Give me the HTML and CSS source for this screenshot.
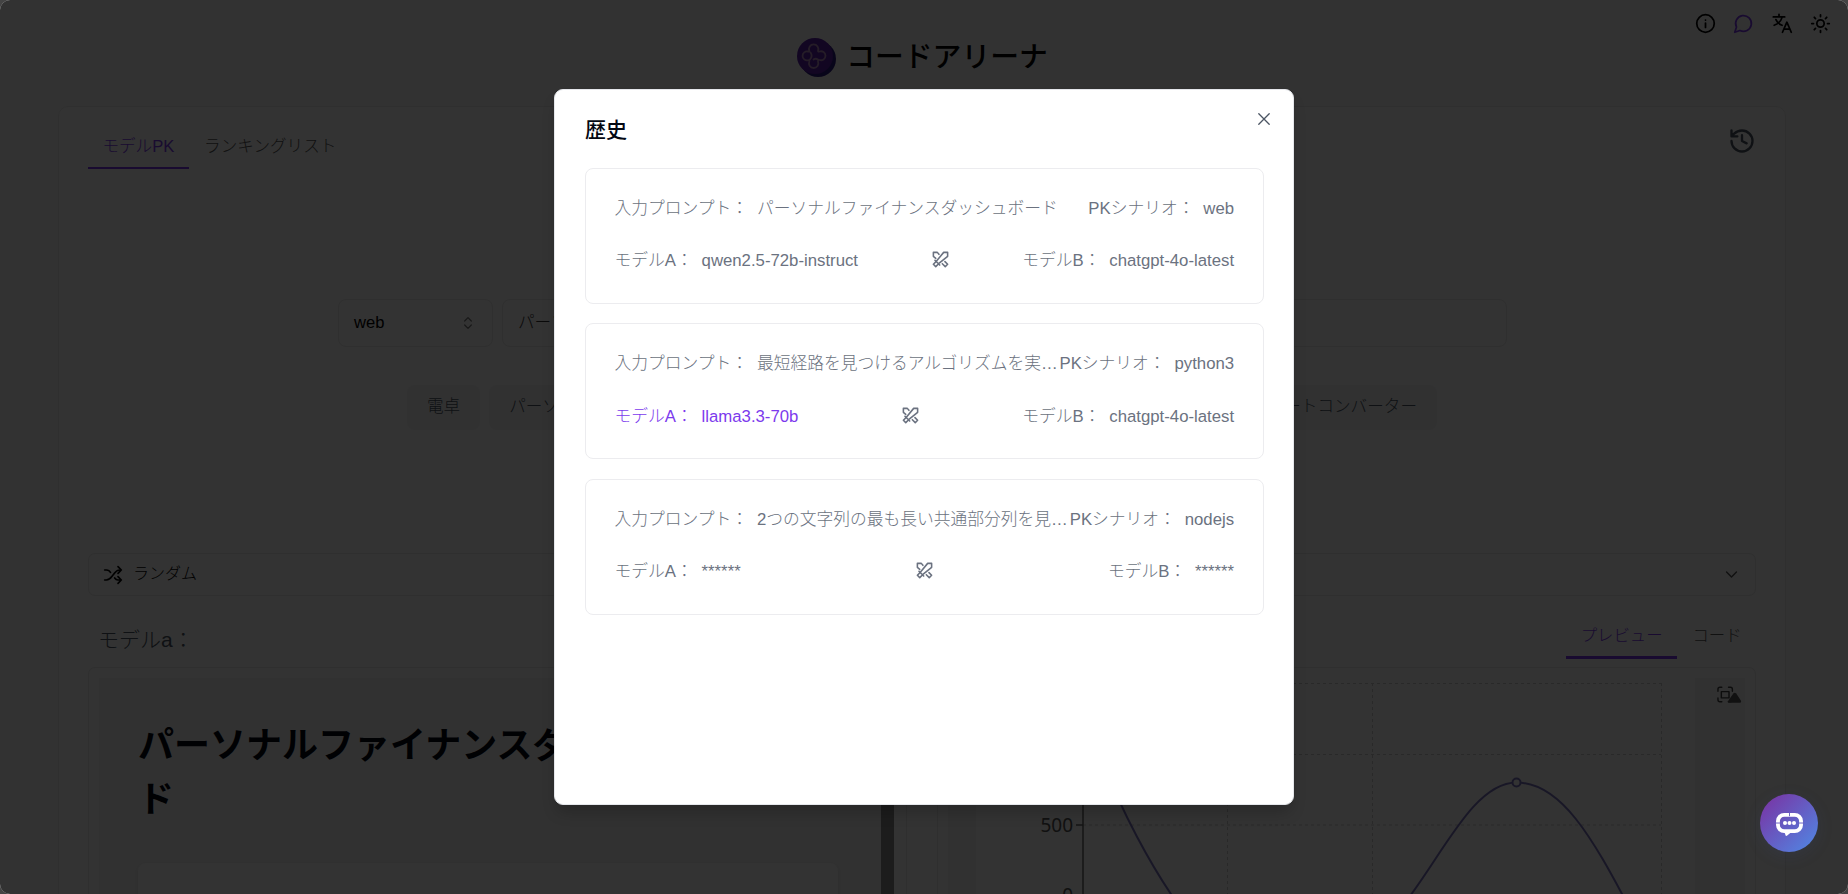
FILE: index.html
```html
<!DOCTYPE html>
<html lang="ja">
<head>
<meta charset="utf-8">
<title>コードアリーナ</title>
<link rel="stylesheet" href="styles.css">
</head>
<body>
<svg width="0" height="0" class="defs">
  <symbol id="swords" viewBox="0 0 24 24"><path d="M21 3v5l-11 9-4 4-3-3 4-4 9-11zM5 13l6 6M14.320 17.320 18 21l3-3-3.365-3.365M10 5.500 8 3H3v5l3 2.500"/></symbol>
</svg>
<div class="page">
  <header class="header">
    <svg class="logo" viewBox="0 0 39 39">
      <circle cx="21" cy="21" r="18" fill="#2c1a80"/><circle cx="18" cy="18" r="18" fill="#5c1ea8"/>
      <path d="M12.300 12.800A4.700 4.700 0 1 1 21 12.800Q21 14 22.500 13.500A4.500 4.500 0 1 1 22.500 22Q21 21.500 21 23.500A4.700 4.700 0 1 1 12.300 23.500Q12.600 22 11 22.300A4.500 4.500 0 1 1 11 13.500Q12.600 14 12.300 12.800M13.500 14.500Q16 18 13 21.500M21 21.500Q18.500 20 16.500 21.500" fill="none" stroke="#b78fc4" stroke-width="1.800"/>
    </svg>
    <h1>コードアリーナ</h1>
    <nav class="tools">
      <svg viewBox="0 0 24 24"><circle cx="12" cy="12" r="10"/><path d="M12 16.500v-5M12 8h.01"/></svg>
      <svg class="violet" viewBox="0 0 24 24"><path d="M7.900 20A9 9 0 1 0 4 16.100L2 22Z"/></svg>
      <svg viewBox="0 0 24 24"><path d="M1.500 4.500h13M8 1.500v3M11.500 5C10.500 9 7 12.500 2.500 14M4.500 7.500c1.500 3.500 4 5.500 7 6.500M12 22l5-11.500L22 22M13.500 18.500h7"/></svg>
      <svg viewBox="0 0 24 24"><circle cx="12" cy="12" r="4.200"/><path d="M12 2v2M12 20v2M4.900 4.900l1.400 1.400M17.700 17.700l1.400 1.400M2 12h2M20 12h2M6.300 17.700l-1.400 1.400M19.100 4.900l-1.400 1.400"/></svg>
    </nav>
  </header>
  <main class="panel">
    <div class="tabbar">
      <div class="tab active">モデルPK</div><div class="tab">ランキングリスト</div>
      <svg class="history" viewBox="0 0 24 24"><path d="M3 12a9 9 0 1 0 9-9 9.750 9.750 0 0 0-6.740 2.740L3 8M3 3v5h5M12 7v5l4 2"/></svg>
    </div>
    <div class="query">
      <div class="field scene">web<svg viewBox="0 0 24 24"><path d="m7 15 5 5 5-5M7 9l5-5 5 5"/></svg></div>
      <div class="field prompt">パーソナルファイナンスダッシュボード</div>
    </div>
    <div class="chips">
      <span class="chip">電卓</span><span class="chip grow">パーソナルファイナンスダッシュボード</span><span class="chip">為替レートコンバーター</span>
    </div>
    <div class="random">
      <svg viewBox="0 0 24 24"><path d="m18 14 4 4-4 4M18 2l4 4-4 4M2 18h2c4.500 0 5.500-3 8-6s3.500-6 8-6h2M2 6h2c2.500 0 4 1 5 3M22 18h-4c-1.500 0-3-1-4-2.500"/></svg>
      <span>ランダム</span>
      <svg class="chev" viewBox="0 0 24 24"><path d="m5 8.500 7 7 7-7"/></svg>
    </div>
    <div class="models">
      <section class="model">
        <div class="mhead"><span class="mname">モデルa：</span></div>
        <div class="frame">
          <div class="site">
            <h2>パーソナルファイナンスダッシュボード</h2>
            <div class="sitecard"></div>
          </div>
          <div class="thumb"></div>
        </div>
      </section>
      <section class="model">
        <div class="mhead end"><div class="tab active">プレビュー</div><div class="tab">コード</div></div>
        <div class="frame">
          <div class="chartpage">
            <svg class="chart" viewBox="976 679 719 240">
              <g class="grid"><path d="M1083 684.500H1661M1083 755.500H1661M1083 826H1661M1083 896.500H1661M1227.500 684V919M1372.500 684V919M1661.500 684V919"/></g>
              <path class="axis" d="M1083 684V919M1076 826h7"/>
              <text x="1073" y="832.500" text-anchor="end">500</text><text x="1073" y="903" text-anchor="end">0</text>
              <path class="line" d="M1100 757C1120 808 1150 868 1185 915M1400 910C1440 862 1472 783.500 1516.500 783.500C1561 783.500 1592 838 1630 910"/>
              <circle class="dot" cx="1516.500" cy="783.500" r="4"/>
            </svg>
            <svg class="scan" viewBox="0 0 26 18"><path d="M1 5V3q0-2 2-2h2M12 1h2q2 0 2 2v2M1 12v2q0 2 2 2h2M12 16h2q2 0 2-2v-2M4.500 5.500h8v6.500h-8z"/><path class="fill" d="m11 16 6-8.500q1.500-1.500 3 0l5 7.500q.5 2-1 2H13q-2 0-2-1z"/></svg>
          </div>
        </div>
      </section>
    </div>
  </main>
</div>
<div class="overlay"></div>
<div class="dialog">
  <div class="dtitle">歴史</div>
  <svg class="close" viewBox="0 0 12 12"><path d="M.8.800l10.400 10.400M11.200.800.8 11.200"/></svg>
  <article class="card">
    <div class="row"><div class="pair"><span>入力プロンプト：</span><span>パーソナルファイナンスダッシュボード</span></div><div class="pair"><span>PKシナリオ：</span><span>web</span></div></div>
    <div class="row"><div class="pair"><span>モデルA：</span><span>qwen2.5-72b-instruct</span></div><svg><use href="#swords"/></svg><div class="pair"><span>モデルB：</span><span>chatgpt-4o-latest</span></div></div>
  </article>
  <article class="card">
    <div class="row"><div class="pair"><span>入力プロンプト：</span><span>最短経路を見つけるアルゴリズムを実…</span></div><div class="pair"><span>PKシナリオ：</span><span>python3</span></div></div>
    <div class="row"><div class="pair win"><span>モデルA：</span><span>llama3.3-70b</span></div><svg><use href="#swords"/></svg><div class="pair"><span>モデルB：</span><span>chatgpt-4o-latest</span></div></div>
  </article>
  <article class="card">
    <div class="row"><div class="pair"><span>入力プロンプト：</span><span>2つの文字列の最も長い共通部分列を見…</span></div><div class="pair"><span>PKシナリオ：</span><span>nodejs</span></div></div>
    <div class="row"><div class="pair"><span>モデルA：</span><span>******</span></div><svg><use href="#swords"/></svg><div class="pair"><span>モデルB：</span><span>******</span></div></div>
  </article>
</div>
<div class="fab">
  <svg viewBox="0 0 30 26"><rect x="3" y="4" width="24" height="17" rx="6.500" fill="none" stroke="#fff" stroke-width="4"/><path d="M9 21h9l-6 5q-1.500 0-1.500-2z" fill="#fff"/><path d="M0 12.500h5M25 12.500h5M15 2.500v2.500" stroke="#6a5fc4" stroke-width="1"/><g fill="#fff"><circle cx="10.300" cy="12.500" r="2.100"/><circle cx="15" cy="12.500" r="2.100"/><circle cx="19.700" cy="12.500" r="2.100"/></g></svg>
</div>
</body>
</html>
```
FILE: styles.css
```css
* { box-sizing: border-box; }
html { background: #444; }
body { margin: 0; height: 894px; overflow: hidden; position: relative; font-family: "Liberation Sans", "Noto Sans CJK JP", sans-serif; font-size: 16.750px; font-weight: 300; line-height: 24px; color: #000; }
svg { fill: none; stroke: currentColor; stroke-width: 2; stroke-linecap: round; stroke-linejoin: round; flex: none; }
.defs { position: absolute; }
.page { height: 894px; overflow: hidden; background: #fafafa; border-radius: 10px; }
.header { height: 106px; padding: 38px 3px 0 0; display: flex; justify-content: center; gap: 10px; position: relative; }
.header h1 { margin: 0; font-size: 28.800px; line-height: 38px; font-weight: 500; }
.logo { width: 39px; height: 39px; stroke: none; }
.tools { position: absolute; right: 17px; top: 13px; display: flex; gap: 17.400px; }
.tools svg { width: 21px; height: 21px; }
.violet { color: #7c3aed; }
.panel { width: 1728px; height: 800px; margin-left: 58px; padding: 28px 29px 0; background: #fdfdfd; border: 1px solid #ebebeb; border-radius: 10px; }
.tabbar { display: flex; height: 35px; font-size: 16.600px; }
.tab { padding: 0 14.400px; height: 34px; line-height: 24px; color: #555; }
.tab + .tab { margin-left: 1px; }
.tab.active { color: #7c3aed; border-bottom: 2px solid #7c3aed; }
.history { width: 28px; height: 28px; margin: -8px 0 0 auto; color: #4b5563; }
.query { display: flex; gap: 9px; margin: 129px 249px 0 250px; font-size: 16.600px; }
.field { height: 48px; border: 1px solid #e8e8e8; border-radius: 8px; padding: 0 15px; line-height: 46px; }
.scene { width: 155px; display: flex; justify-content: space-between; align-items: center; }
.scene svg { width: 16px; height: 16px; color: #777; stroke-width: 1.800; margin-right: 1px; }
.prompt { flex: 1; color: #333; }
.chips { display: flex; gap: 9px; margin: 38px 319px 0; font-size: 16.600px; }
.chip { height: 45px; line-height: 43px; padding: 0 20px; background: #f3f4f6; border-radius: 8px; color: #4b5563; white-space: nowrap; }
.grow { flex: 1; }
.random { margin-top: 123px; height: 43px; border: 1px solid #e8e8e8; border-radius: 7px; display: flex; align-items: center; padding: 0 15px 0 14px; gap: 10px; font-size: 16px; line-height: 22px; }
.random svg { width: 20px; height: 20px; }
.random span { margin-bottom: 2px; }
.random .chev { margin-left: auto; width: 17px; height: 17px; color: #555; }
.models { display: flex; gap: 30px; }
.model { flex: 1; }
.mhead { height: 71px; padding: 29px 10px 0; }
.mname { font-size: 21px; line-height: 30px; color: #4b5563; }
.mhead.end { display: flex; justify-content: flex-end; padding: 27px 0 0; }
.mhead .tab { height: 36px; font-size: 16.400px; }
.mhead .tab.active { border-bottom-width: 3px; }
.frame { height: 240px; border: 1px solid #e8e8e8; border-radius: 7px; padding: 10px 10px 0; display: flex; }
.site { flex: 1; background: #f5f5f5; padding: 41px 43px 0 39px; }
.site h2 { margin: 0; padding-right: 60px; font-size: 36px; line-height: 54px; font-weight: 700; color: #030712; }
.sitecard { margin-top: 36px; height: 60px; background: #fdfdfd; border-radius: 8px; box-shadow: 0 2px 6px rgba(0,0,0,.1); }
.thumb { width: 13px; background: #8c8c8c; margin-right: 2px; }
.chartpage { flex: 1; background: #f5f5f5; position: relative; padding-left: 28px; }
.chart { width: 719px; height: 240px; background: #fdfdfd; display: block; stroke-linecap: butt; }
.grid path { stroke: #ccc; stroke-width: 1; stroke-dasharray: 3 3; }
.axis { stroke: #666; stroke-width: 1.500; }
.chart text { font: 19px "Noto Sans", sans-serif; fill: #555; stroke: none; }
.line, .dot { stroke: #7b72bd; }
.dot { fill: #fff; }
.scan { position: absolute; right: 3px; top: 8px; width: 25px; height: 18px; stroke-width: 1.500; color: #444; }
.scan .fill { fill: #555; stroke: none; }
.overlay { position: absolute; inset: 0; background: rgba(0,0,0,.8); border-radius: 10px; }
.dialog { position: absolute; left: 554.400px; top: 89.400px; width: 739.200px; height: 715.200px; background: #fff; border: 1px solid #e5e7eb; border-radius: 9px; padding: 25px 29px 0 29.600px; color: #6b7280; box-shadow: 0 10px 15px -3px rgba(0,0,0,.2); }
.dtitle { font-size: 21px; font-weight: 500; line-height: 30px; color: #030712; margin-bottom: 22.500px; }
.close { position: absolute; right: 23px; top: 23px; width: 12px; height: 12px; color: #4b5563; stroke-width: 1.300; }
.card { height: 136px; margin-bottom: 19.600px; border: 1.500px solid #ececef; border-radius: 8px; padding: 28px 28.500px; }
.row { display: flex; justify-content: space-between; align-items: center; height: 24px; margin-bottom: 28.400px; white-space: nowrap; }
.row svg { width: 19px; height: 19px; margin-top: -3px; }
.pair { display: flex; gap: 8.900px; }
.win { color: #7c3aed; }
.fab { position: absolute; left: 1760px; top: 794px; width: 58px; height: 58px; border-radius: 50%; background: linear-gradient(135deg, #7b2fa0, #4f8ae6); display: flex; align-items: center; justify-content: center; box-shadow: 0 4px 16px rgba(60,80,140,.15); }
.fab svg { width: 29px; height: 25px; stroke: none; }
```
